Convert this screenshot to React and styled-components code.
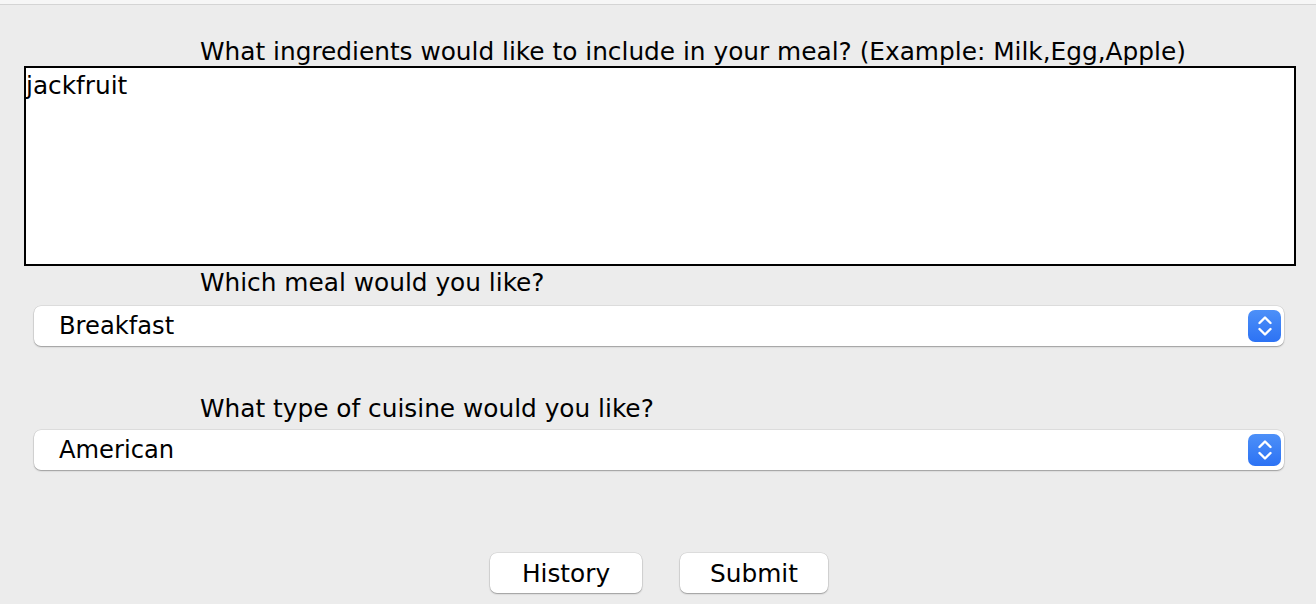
import React from 'react'
import styled, { createGlobalStyle } from 'styled-components'

const GlobalStyle = createGlobalStyle`
    html, body {
        margin:0;
        padding:0;
        background:#ececec;
    }
    * {
        box-sizing:border-box;
    }
`

const meals = 'Breakfast'
const cuisine = 'American'

const Stepper = () => (
    <StepperBox>
        <svg width="16" height="24" viewBox="0 0 16 24" fill="none" stroke="white" strokeWidth="2.4" strokeLinecap="round" strokeLinejoin="round">
            <polyline points="2.5,9 8,3.5 13.5,9" />
            <polyline points="2.5,15 8,20.5 13.5,15" />
        </svg>
    </StepperBox>
)

const Select = ({ value, mt }) => (
    <SelectBox mt={mt}>
        <span>{value}</span>
        <Stepper />
    </SelectBox>
)

const App = () => {
    return (
        <>
            <GlobalStyle />
            <Window>
                <TitleStrip />
                <Form>
                    <Label mt={32}>What ingredients would like to include in your meal? (Example: Milk,Egg,Apple)</Label>
                    <Ingredients readOnly value="jackfruit" />
                    <Label mt={2}>Which meal would you like?</Label>
                    <Select value={meals} mt={8} />
                    <Label mt={48}>What type of cuisine would you like?</Label>
                    <Select value={cuisine} mt={6} />
                    <Buttons>
                        <Button width={152}>History</Button>
                        <Button width={148}>Submit</Button>
                    </Buttons>
                </Form>
            </Window>
        </>
    )
}

export default App

const Window = styled.div`
    width:1316px;
    height:604px;
    background:#ececec;
    font-family:"DejaVu Sans", "Liberation Sans", sans-serif;
    color:#000;
    overflow:hidden;
`

const TitleStrip = styled.div`
    height:5px;
    background:#f6f6f6;
    border-bottom:1px solid #d4d4d4;
`

const Form = styled.div`
    display:flex;
    flex-direction:column;
`

const Label = styled.div`
    margin-top:${props => props.mt}px;
    padding-left:200px;
    font-size:24.8px;
    line-height:30px;
`

const Ingredients = styled.textarea`
    display:block;
    margin:-1px 0 0 24px;
    width:1272px;
    height:200px;
    border:2px solid #000;
    background:#fff;
    padding:3px 0 0 0;
    font-family:inherit;
    font-size:24.8px;
    line-height:30px;
    resize:none;
    outline:none;
    color:#000;
`

const SelectBox = styled.div`
    margin:${props => props.mt}px 0 0 34px;
    width:1250px;
    height:40px;
    background:#fff;
    border-radius:7px;
    box-shadow:0 1px 1.5px rgba(0,0,0,0.3), 0 0 0 0.5px rgba(0,0,0,0.12);
    display:flex;
    align-items:center;
    justify-content:space-between;
    padding:0 3px 0 25px;
    font-size:24.2px;
`

const StepperBox = styled.div`
    width:33px;
    height:32px;
    border-radius:7px;
    background:linear-gradient(#4d90f8, #2c72f4);
    display:flex;
    align-items:center;
    justify-content:center;
`

const Buttons = styled.div`
    margin-top:83px;
    display:flex;
    justify-content:center;
    gap:38px;
    padding-left:2px;
`

const Button = styled.div`
    width:${props => props.width}px;
    height:40px;
    background:#fff;
    border-radius:7px;
    box-shadow:0 1px 1.5px rgba(0,0,0,0.3), 0 0 0 0.5px rgba(0,0,0,0.12);
    display:flex;
    align-items:center;
    justify-content:center;
    font-size:24.8px;
`
